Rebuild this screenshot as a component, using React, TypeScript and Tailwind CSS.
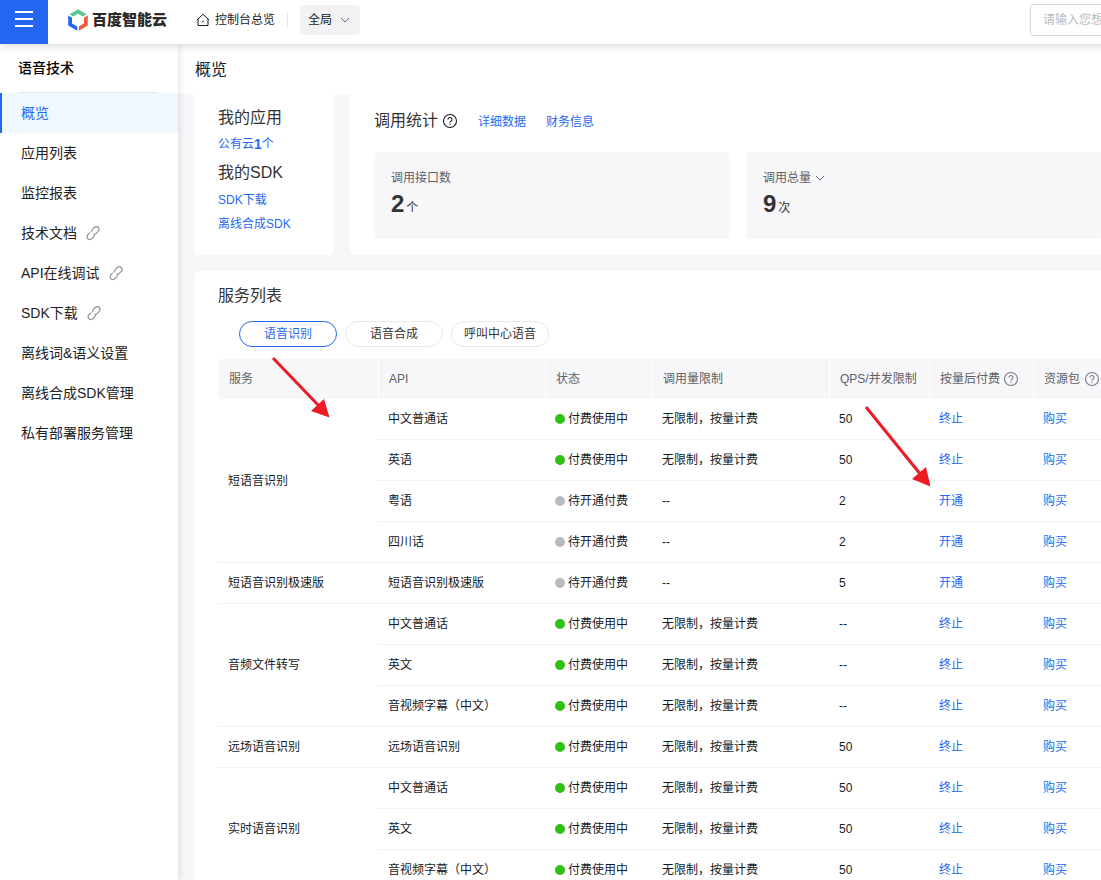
import type { ReactNode } from 'react';

type Row = { api: string; active: boolean; limit: string; qps: string };
type Service = { name: string; rows: Row[] };

const UNLIMITED = '无限制，按量计费';

const NAV = [
  { label: '概览', active: true },
  { label: '应用列表' },
  { label: '监控报表' },
  { label: '技术文档', external: true },
  { label: 'API在线调试', external: true },
  { label: 'SDK下载', external: true },
  { label: '离线词&语义设置' },
  { label: '离线合成SDK管理' },
  { label: '私有部署服务管理' },
];

const TABS = ['语音识别', '语音合成', '呼叫中心语音'];

const SERVICES: Service[] = [
  {
    name: '短语音识别',
    rows: [
      { api: '中文普通话', active: true, limit: UNLIMITED, qps: '50' },
      { api: '英语', active: true, limit: UNLIMITED, qps: '50' },
      { api: '粤语', active: false, limit: '--', qps: '2' },
      { api: '四川话', active: false, limit: '--', qps: '2' },
    ],
  },
  {
    name: '短语音识别极速版',
    rows: [{ api: '短语音识别极速版', active: false, limit: '--', qps: '5' }],
  },
  {
    name: '音频文件转写',
    rows: [
      { api: '中文普通话', active: true, limit: UNLIMITED, qps: '--' },
      { api: '英文', active: true, limit: UNLIMITED, qps: '--' },
      { api: '音视频字幕（中文）', active: true, limit: UNLIMITED, qps: '--' },
    ],
  },
  {
    name: '远场语音识别',
    rows: [{ api: '远场语音识别', active: true, limit: UNLIMITED, qps: '50' }],
  },
  {
    name: '实时语音识别',
    rows: [
      { api: '中文普通话', active: true, limit: UNLIMITED, qps: '50' },
      { api: '英文', active: true, limit: UNLIMITED, qps: '50' },
      { api: '音视频字幕（中文）', active: true, limit: UNLIMITED, qps: '50' },
    ],
  },
];

function HelpIcon({ className }: { className?: string }) {
  return (
    <svg viewBox="0 0 16 16" className={className} fill="none" stroke="currentColor" aria-hidden="true">
      <circle cx="8" cy="8" r="6.5" strokeWidth="1.1" />
      <path d="M6 6.6a2 2 0 1 1 3 1.600c-.7.400-1 .700-1 1.300" strokeWidth="1.1" />
      <path d="M8 10.600v1.200" strokeWidth="1.2" />
    </svg>
  );
}

function LinkIcon() {
  return (
    <svg viewBox="0 0 16 16" className="h-4 w-4 text-[#909299]" fill="none" stroke="currentColor" strokeWidth="1.2" aria-hidden="true">
      <path d="M6.700 7.200a2.300 2.300 0 0 1 .400-2.400l2.300-2.300a2.700 2.700 0 0 1 3.900 0a2.700 2.700 0 0 1 0 3.900L11 8.700a2.400 2.400 0 0 1-2.300.700" />
      <path d="M9.300 9.300a2.300 2.300 0 0 1-.400 2.400l-2.100 2a2.700 2.700 0 0 1-3.900 0a2.700 2.700 0 0 1 0-3.900L5 7.700" />
    </svg>
  );
}

function Chevron({ className }: { className?: string }) {
  return (
    <svg viewBox="0 0 10 10" className={className} fill="none" stroke="currentColor" strokeWidth="0.9" aria-hidden="true">
      <path d="M1 3l4 4 4-4" />
    </svg>
  );
}

function Logo() {
  return (
    <a href="#" className="ml-5 flex items-center gap-1 text-[#2b2b2b]">
      <svg viewBox="0 0 20 22" className="h-[22px] w-5" aria-hidden="true">
        <path d="M1.500 5.300L10 .300l8.500 5-3.600 2.200L10 4.700 5.100 7.500z" fill="#58c98a" />
        <path d="M.200 6.600l3.800 2.200v5.600l5.200 3v4.400L.200 16.500z" fill="#2468f2" />
        <path d="M19.800 6.600L16 8.800v5.600l-5.200 3v4.400l9-5.300z" fill="#f05a3c" />
      </svg>
      <span className="text-[15px] leading-5 font-black">百度智能云</span>
    </a>
  );
}

function Header() {
  return (
    <header className="relative z-20 flex h-11 shrink-0 bg-white shadow-[0_2px_8px_rgba(0,0,0,0.15)]">
      <button type="button" aria-label="菜单" className="flex w-12 justify-center bg-[#2468f2] pt-[11px] text-white">
        <svg viewBox="0 0 18 16" className="h-4 w-[18px]" stroke="currentColor" strokeWidth="2" aria-hidden="true">
          <path d="M0 1h18M0 8h18M0 15h18" />
        </svg>
      </button>
      <div className="flex flex-1 items-center pb-[5px] text-xs text-[#151b26]">
        <Logo />
        <a href="#" className="ml-7 flex items-center gap-1">
          <svg viewBox="0 0 16 16" className="h-4 w-4" fill="none" stroke="currentColor" strokeWidth="1" aria-hidden="true">
            <path d="M1.900 8L8 2.300 14.100 8M3 7v6.500h10V7M8 8.500v2" />
          </svg>
          控制台总览
        </a>
        <span className="ml-3 h-[14px] w-px bg-[#e4e5e8]" />
        <button type="button" className="ml-3 flex h-[30px] items-center gap-2 rounded bg-[#f2f2f4] pr-[10px] pl-2">
          全局
          <Chevron className="h-[10px] w-[10px] text-[#5c5f66]" />
        </button>
        <input
          type="search"
          aria-label="搜索"
          placeholder="请输入您想"
          className="mr-4 ml-auto h-8 w-24 rounded border border-[#d4d6d9] px-3 text-xs placeholder:text-[#b8babf]"
        />
      </div>
    </header>
  );
}

function Sidebar() {
  return (
    <aside className="relative z-10 w-[178px] shrink-0 bg-white shadow-[0_0_8px_rgba(0,0,0,0.15)]">
      <h2 className="mr-5 ml-[18px] h-[49px] border-b border-[#e8e9eb] text-sm leading-[48px] font-medium text-black">语音技术</h2>
      <nav>
        {NAV.map((item) => (
          <a
            key={item.label}
            href="#"
            className={
              item.active
                ? 'flex h-10 items-center border-l-2 border-[#2468f2] bg-[#f0f8ff] pl-[19px] text-sm text-[#2468f2]'
                : 'flex h-10 items-center gap-2 border-l-2 border-transparent pl-[19px] text-sm text-[#222]'
            }
          >
            {item.label}
            {item.external && <LinkIcon />}
          </a>
        ))}
      </nav>
    </aside>
  );
}

function StatTile({ label, value, unit }: { label: ReactNode; value: string; unit: string }) {
  return (
    <div className="h-[87px] flex-1 rounded bg-[#f7f7f9] px-[17px] pt-4 text-xs">
      <div className="leading-5 text-[#5c5f66]">{label}</div>
      <div className="mt-1 leading-6">
        <strong className="mr-[2px] text-2xl leading-6">{value}</strong>
        {unit}
      </div>
    </div>
  );
}

function Th({ children }: { children: ReactNode }) {
  return (
    <th scope="col" className="border-l border-white bg-[#f7f7f9] pl-[10px] font-normal whitespace-nowrap text-[#5c5f66] first:rounded-tl first:border-l-0 first:pl-[11px]">
      {children}
    </th>
  );
}

function ServiceTable() {
  return (
    <table className="mt-3 w-full table-fixed border-separate border-spacing-0 text-left text-xs text-[#151b26]">
      <colgroup>
        <col className="w-[160px]" />
        <col className="w-[167px]" />
        <col className="w-[107px]" />
        <col className="w-[177px]" />
        <col className="w-[100px]" />
        <col className="w-[104px]" />
        <col />
      </colgroup>
      <thead>
        <tr className="h-10">
          <Th>服务</Th>
          <Th>API</Th>
          <Th>状态</Th>
          <Th>调用量限制</Th>
          <Th>QPS/并发限制</Th>
          <Th>
            <span className="flex items-center gap-[3px]">按量后付费<HelpIcon className="h-4 w-4 text-[#7a7c82]" /></span>
          </Th>
          <Th>
            <span className="flex items-center gap-1">资源包<HelpIcon className="h-4 w-4 text-[#7a7c82]" /></span>
          </Th>
        </tr>
      </thead>
      <tbody>
        {SERVICES.map((service) =>
          service.rows.map((row, i) => (
            <tr key={service.name + row.api} className="h-[41px] *:border-b *:border-[#f0f0f2] *:pl-[10px]">
              {i === 0 && <td rowSpan={service.rows.length}>{service.name}</td>}
              <td>{row.api}</td>
              <td>
                <span className="flex items-center gap-[3px]">
                  <i className={row.active ? 'h-[10px] w-[10px] rounded-full bg-[#30bf13]' : 'h-[10px] w-[10px] rounded-full bg-[#b8babf]'} />
                  {row.active ? '付费使用中' : '待开通付费'}
                </span>
              </td>
              <td>{row.limit}</td>
              <td>{row.qps}</td>
              <td><a href="#" className="text-[#2468f2]">{row.active ? '终止' : '开通'}</a></td>
              <td><a href="#" className="text-[#2468f2]">购买</a></td>
            </tr>
          )),
        )}
      </tbody>
    </table>
  );
}

// Red pointers drawn over the page
function Annotations() {
  return (
    <svg className="pointer-events-none absolute top-0 left-0 z-30 h-[880px] w-[1101px]" viewBox="0 0 1101 880" stroke="#ed1c24" fill="#ed1c24" aria-hidden="true">
      <path d="M273 358L320 407" strokeWidth="3" />
      <path d="M329.500 417.500L324 399L311 411z" stroke="none" />
      <path d="M866 407L921 475" strokeWidth="3" />
      <path d="M930.500 486.500L926 467L912 479z" stroke="none" />
    </svg>
  );
}

export default function App() {
  return (
    <div className="relative h-screen overflow-hidden font-['Liberation_Sans','Noto_Sans_CJK_SC',sans-serif] text-[#333]">
      <div className="flex h-full min-w-[1142px] flex-col">
        <Header />
        <div className="flex min-h-0 flex-1">
          <Sidebar />
          <main className="flex-1 bg-[#f7f7f9]">
            <h1 className="h-[50px] bg-white pl-[17px] text-base leading-[52px] text-[#151b26]">概览</h1>
            <div className="flex gap-4 px-4">
              <section className="w-[140px] rounded-b-md bg-white px-6 pt-3 pb-[19px] text-xs leading-6">
                <h3 className="text-base leading-6">我的应用</h3>
                <a href="#" className="mt-[2px] flex h-6 items-center text-[#2468f2]">
                  公有云<b className="text-sm">1</b>个
                </a>
                <h3 className="mt-[5px] text-base leading-6">我的SDK</h3>
                <a href="#" className="mt-[3px] block text-[#2468f2]">SDK下载</a>
                <a href="#" className="block text-[#2468f2]">离线合成SDK</a>
              </section>
              <section className="flex-1 rounded-b-md bg-white px-6 pt-[15px] pb-4">
                <div className="flex h-6 items-center text-xs">
                  <h3 className="text-base leading-6">调用统计</h3>
                  <HelpIcon className="ml-1 h-4 w-4 text-[#151b26]" />
                  <a href="#" className="ml-5 pt-[2px] text-[#2468f2]">详细数据</a>
                  <a href="#" className="ml-5 pt-[2px] text-[#2468f2]">财务信息</a>
                </div>
                <div className="mt-[19px] flex gap-4">
                  <StatTile label="调用接口数" value="2" unit="个" />
                  <StatTile
                    label={
                      <button type="button" className="flex items-center gap-1">
                        调用总量
                        <Chevron className="h-[10px] w-[10px]" />
                      </button>
                    }
                    value="9"
                    unit="次"
                  />
                </div>
              </section>
            </div>
            <section className="mx-4 mt-4 rounded-md bg-white px-6 pt-[13px] pb-6">
              <h3 className="text-base leading-6">服务列表</h3>
              <div className="mt-[13px] ml-[21px] flex gap-2 text-xs">
                {TABS.map((tab, i) => (
                  <button
                    key={tab}
                    type="button"
                    className={
                      i === 0
                        ? 'h-[26px] w-[98px] rounded-full border border-[#2468f2] text-[#2468f2]'
                        : 'h-[26px] w-[98px] rounded-full border border-[#e8e9eb]'
                    }
                  >
                    {tab}
                  </button>
                ))}
              </div>
              <ServiceTable />
            </section>
          </main>
        </div>
      </div>
      <Annotations />
    </div>
  );
}
